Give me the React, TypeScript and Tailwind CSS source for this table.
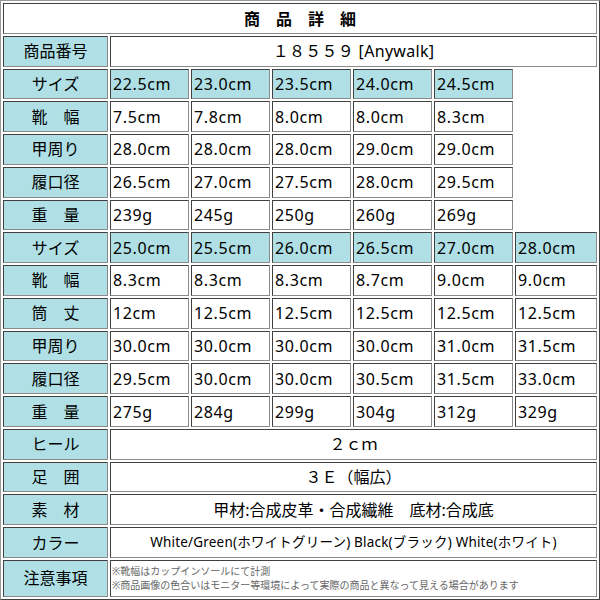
import React from "react";

const inset =
  "border border-t-[#404040] border-l-[#404040] border-b-[#8a8a8a] border-r-[#8a8a8a]";

function Label({ children }: { children: React.ReactNode }) {
  return (
    <div
      className={`${inset} bg-[#b0e0e6] flex items-center justify-center text-[16px] text-black leading-none`}
    >
      {children}
    </div>
  );
}

function Cell({ children, cyan }: { children?: React.ReactNode; cyan?: boolean }) {
  return (
    <div
      className={`${inset} ${cyan ? "bg-[#b0e0e6]" : "bg-white"} flex items-center pl-[2px] text-[16px] tracking-[0.6px] text-black leading-none whitespace-nowrap overflow-hidden`}
    >
      {children}
    </div>
  );
}

function Wide({ children, className = "" }: { children: React.ReactNode; className?: string }) {
  return (
    <div
      className={`${inset} bg-white col-span-6 flex items-center justify-center text-black leading-none whitespace-nowrap ${className}`}
    >
      {children}
    </div>
  );
}

const block1: [string, string[], boolean?][] = [
  ["サイズ", ["22.5cm", "23.0cm", "23.5cm", "24.0cm", "24.5cm"], true],
  ["靴　幅", ["7.5cm", "7.8cm", "8.0cm", "8.0cm", "8.3cm"]],
  ["甲周り", ["28.0cm", "28.0cm", "28.0cm", "29.0cm", "29.0cm"]],
  ["履口径", ["26.5cm", "27.0cm", "27.5cm", "28.0cm", "29.5cm"]],
  ["重　量", ["239g", "245g", "250g", "260g", "269g"]],
];

const block2: [string, string[], boolean?][] = [
  ["サイズ", ["25.0cm", "25.5cm", "26.0cm", "26.5cm", "27.0cm", "28.0cm"], true],
  ["靴　幅", ["8.3cm", "8.3cm", "8.3cm", "8.7cm", "9.0cm", "9.0cm"]],
  ["筒　丈", ["12cm", "12.5cm", "12.5cm", "12.5cm", "12.5cm", "12.5cm"]],
  ["甲周り", ["30.0cm", "30.0cm", "30.0cm", "30.0cm", "31.0cm", "31.5cm"]],
  ["履口径", ["29.5cm", "30.0cm", "30.0cm", "30.5cm", "31.5cm", "33.0cm"]],
  ["重　量", ["275g", "284g", "299g", "304g", "312g", "329g"]],
];

export default function App() {
  return (
    <div
      className="w-[600px] h-[600px] bg-white border border-t-[#9a9a9a] border-l-[#9a9a9a] border-b-[#404040] border-r-[#404040] p-[2px]"
      style={{ fontFamily: '"Noto Sans", "Noto Sans CJK JP", sans-serif' }}
    >
      <div className="grid h-full grid-cols-[105px_repeat(5,79px)_1fr] grid-rows-[repeat(17,1fr)_37px] gap-[2px]">
        <div
          className={`${inset} bg-white col-span-7 flex items-center justify-center text-[16px] font-bold text-black leading-none`}
          style={{ fontFamily: '"Noto Sans CJK JP", sans-serif' }}
        >
          商　品　詳　細
        </div>

        <Label>商品番号</Label>
        <Wide className="text-[16px] tracking-[0.3px]">１８５５９ [Anywalk]</Wide>

        {block1.map(([label, vals, cyan], i) => (
          <React.Fragment key={"a" + i}>
            <Label>{label}</Label>
            {vals.map((v, j) => (
              <Cell key={j} cyan={cyan}>
                {v}
              </Cell>
            ))}
            <div />
          </React.Fragment>
        ))}

        {block2.map(([label, vals, cyan], i) => (
          <React.Fragment key={"b" + i}>
            <Label>{label}</Label>
            {vals.map((v, j) => (
              <Cell key={j} cyan={cyan}>
                {v}
              </Cell>
            ))}
          </React.Fragment>
        ))}

        <Label>ヒール</Label>
        <Wide className="text-[16px]">２ｃｍ</Wide>

        <Label>足　囲</Label>
        <Wide className="text-[16px]">３Ｅ（幅広）</Wide>

        <Label>素　材</Label>
        <Wide className="text-[16px]">甲材:合成皮革・合成繊維　底材:合成底</Wide>

        <Label>カラー</Label>
        <Wide className="text-[13.5px] tracking-[0.2px]">
          White/Green(ホワイトグリーン) Black(ブラック) White(ホワイト)
        </Wide>

        <Label>注意事項</Label>
        <div
          className={`${inset} bg-white col-span-6 flex flex-col justify-center pl-[1px] text-[10px] text-[#666666] leading-[14px] whitespace-nowrap`}
        >
          <div>※靴幅はカップインソールにて計測</div>
          <div>※商品画像の色合いはモニター等環境によって実際の商品と異なって見える場合があります</div>
        </div>
      </div>
    </div>
  );
}
